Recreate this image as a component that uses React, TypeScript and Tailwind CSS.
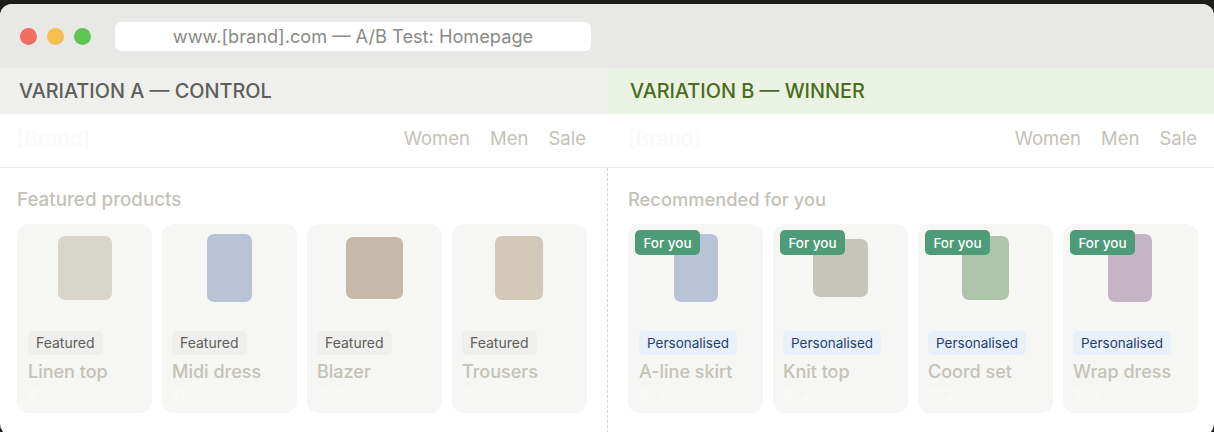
import React from 'react';

interface Product {
  name: string;
  price: string;
  swatch: string;
}

const controlProducts: Product[] = [
  { name: 'Linen top', price: '$38', swatch: 'w-[54px] h-[64px] bg-[#d8d5cd]' },
  { name: 'Midi dress', price: '$65', swatch: 'w-[45px] h-[68px] bg-[#b8c4d6]' },
  { name: 'Blazer', price: '$98', swatch: 'w-[57px] h-[62px] bg-[#c4b8a8]' },
  { name: 'Trousers', price: '$55', swatch: 'w-[48px] h-[64px] -ml-[1px] bg-[#d2c9b9]' },
];

const winnerProducts: Product[] = [
  { name: 'A-line skirt', price: '$55', swatch: 'w-[44px] h-[68px] bg-[#b8c4d6]' },
  { name: 'Knit top', price: '$42', swatch: 'w-[55px] h-[58px] bg-[#c8c5bd]' },
  { name: 'Coord set', price: '$72', swatch: 'w-[47px] h-[64px] bg-[#aec4a8]' },
  { name: 'Wrap dress', price: '$59', swatch: 'w-[44px] h-[68px] -ml-[1px] bg-[#c4b4c4]' },
];

const Nav: React.FC<{ className: string }> = ({ className }) => (
  <div className={`h-[54px] pb-[3px] flex items-center justify-between border-b border-[#e8e8e6] ${className}`}>
    <span className="text-[20.5px] font-medium text-[#fafaf8]">[Brand]</span>
    <div className="flex gap-[20px] text-[18.5px] text-[#c4c2b8]">
      <span>Women</span>
      <span>Men</span>
      <span>Sale</span>
    </div>
  </div>
);

const ProductCard: React.FC<{ product: Product; personalised?: boolean }> = ({ product, personalised }) => (
  <div className="relative h-[189px] rounded-[12px] bg-[#f6f6f4] px-[10px] first:pl-[11px]">
    {personalised && (
      <span className="absolute left-[7px] top-[6px] h-[25px] w-[65px] rounded-[5px] bg-[#4d9b78] text-center text-[13.5px] leading-[26px] font-medium text-white">
        For you
      </span>
    )}
    <div className="h-[88px] flex items-center justify-center">
      <div className={`rounded-[7px] ${product.swatch}`} />
    </div>
    <span
      className={
        personalised
          ? 'mt-[19px] block w-fit h-[24px] rounded-[5px] bg-[#e8f0fa] px-[8px] text-[13.5px] leading-[24px] text-[#1f3f76]'
          : 'mt-[19px] block w-fit h-[24px] rounded-[5px] bg-[#efefed] px-[8px] text-[14px] leading-[24px] text-[#5f5e5a]'
      }
    >
      {personalised ? 'Personalised' : 'Featured'}
    </span>
    <div className="mt-[4px] text-[18px] leading-[26px] font-medium text-[#c4c2b8]">{product.name}</div>
    <div className="text-[14px] leading-[20px] text-[#fafaf8]">{product.price}</div>
  </div>
);

const App: React.FC = () => {
  return (
    <div className="h-[432px] overflow-hidden bg-[#1c1c1a] pt-[4px] font-['Inter',sans-serif]">
      <div className="h-[432px] rounded-[12px] overflow-hidden bg-white">
        <div className="h-[64px] bg-[#e8e8e6] flex items-center pl-[20px]">
          <div className="flex gap-[10px]">
            <span className="w-[17px] h-[17px] rounded-full bg-[#f26d62]" />
            <span className="w-[17px] h-[17px] rounded-full bg-[#f6bf50]" />
            <span className="w-[17px] h-[17px] rounded-full bg-[#5fc554]" />
          </div>
          <div className="ml-[24px] w-[476px] h-[29px] rounded-[6px] bg-white text-center text-[18.2px] leading-[29px] text-[#8a8a86]">
            www.[brand].com — A/B Test: Homepage
          </div>
        </div>

        <div className="grid grid-cols-2">
          <div>
            <div className="h-[46px] bg-[#efefed] pl-[19px] pt-[2px] flex items-center text-[19.85px] font-medium text-[#5f5e5a]">
              VARIATION A — CONTROL
            </div>
            <Nav className="pl-[17px] pr-[21px]" />
            <div className="pl-[17px] pr-[20px]">
              <h2 className="mt-[20px] mb-[12px] text-[18.8px] leading-[24px] font-medium text-[#c4c2b8]">
                Featured products
              </h2>
              <div className="grid grid-cols-4 gap-[10px]">
                {controlProducts.map((p) => (
                  <ProductCard key={p.name} product={p} />
                ))}
              </div>
            </div>
          </div>

          <div>
            <div className="h-[46px] bg-[#eaf3e2] pl-[23px] pt-[2px] flex items-center text-[19.85px] font-medium text-[#4a6b22]">
              VARIATION B — WINNER
            </div>
            <Nav className="pl-[21px] pr-[17px]" />
            <div className="h-[265px] border-l border-dashed border-[#d4d4d0] pl-[20px] pr-[16px]">
              <h2 className="pt-[19px] mb-[13px] text-[18.3px] leading-[24px] font-medium text-[#c4c2b8]">
                Recommended for you
              </h2>
              <div className="grid grid-cols-4 gap-[10px]">
                {winnerProducts.map((p) => (
                  <ProductCard key={p.name} product={p} personalised />
                ))}
              </div>
            </div>
          </div>
        </div>
      </div>
    </div>
  );
};

export default App;
